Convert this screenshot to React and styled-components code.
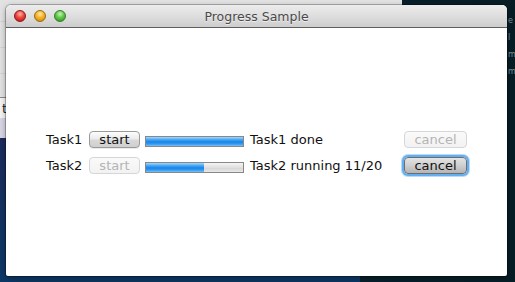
import React from 'react';
import styled, { createGlobalStyle, css } from 'styled-components';

const GlobalStyle = createGlobalStyle`
  html, body {
    margin: 0;
    padding: 0;
    background: #0b2230;
  }
  body {
    font-family: "DejaVu Sans", "Liberation Sans", sans-serif;
  }
`;

const tasks = [
  { name: 'Task1', status: 'Task1 done', progress: 1, running: false },
  { name: 'Task2', status: 'Task2 running 11/20', progress: 0.6, running: true },
];

const App = () => {
  return (
    <Desktop>
      <GlobalStyle />
      <BackWindow>
        <BackToolbar />
        <BackRow><BackLetter>t</BackLetter></BackRow>
        <BackRow $tint />
      </BackWindow>
      <SideText>
        <span>e</span>
        <span>l</span>
        <span>m</span>
        <span>m</span>
      </SideText>
      <Window>
        <TitleBar>
          <Lights>
            <Light $color="red" />
            <Light $color="yellow" />
            <Light $color="green" />
          </Lights>
          <Title>Progress Sample</Title>
        </TitleBar>
        <Content>
          <TaskGrid>
            {tasks.map((t) => (
              <React.Fragment key={t.name}>
                <Label>{t.name}</Label>
                <Button disabled={t.running}>start</Button>
                <Bar>
                  <Fill style={{ width: `${t.progress * 100}%` }} />
                </Bar>
                <Status>{t.status}</Status>
                <Button disabled={!t.running} $focused={t.running}>cancel</Button>
              </React.Fragment>
            ))}
          </TaskGrid>
        </Content>
      </Window>
    </Desktop>
  );
};

export default App;

const Desktop = styled.div`
  position: relative;
  width: 515px;
  height: 282px;
  overflow: hidden;
  background:
    linear-gradient(90deg, transparent 0, transparent 70%, #08202b 70%, #071d26 100%),
    linear-gradient(180deg, #2a2756 0%, #1c2c5c 50%, #0c3866 100%);
`;

const BackWindow = styled.div`
  position: absolute;
  left: -300px;
  top: -30px;
  width: 702px;
  height: 168px;
  display: flex;
  flex-direction: column;
  background: #e7e7e7;
`;

const BackToolbar = styled.div`
  height: 127px;
  border-bottom: 1px solid #8a8a8a;
  background: repeating-linear-gradient(180deg, #e2e2e2 0, #e2e2e2 25px, #d4d4d4 25px, #d4d4d4 26px);
`;

const BackRow = styled.div`
  height: 20px;
  display: flex;
  align-items: center;
  background: ${(p) => (p.$tint ? '#d9d6e4' : '#f4f4f4')};
`;

const BackLetter = styled.span`
  margin-left: 302px;
  font-size: 13px;
  color: #222;
`;

const SideText = styled.div`
  position: absolute;
  left: 508px;
  top: 12px;
  display: flex;
  flex-direction: column;
  font-size: 8px;
  line-height: 17px;
  color: #7f9198;
`;

const Window = styled.div`
  position: absolute;
  left: 6px;
  top: 5px;
  width: 501px;
  height: 271px;
  display: flex;
  flex-direction: column;
  background: #fff;
  border-radius: 5px 5px 2px 2px;
  overflow: hidden;
  box-shadow: 0 0 0 1px rgba(0, 0, 0, 0.25), 0 2px 6px rgba(0, 0, 0, 0.35);
`;

const TitleBar = styled.div`
  position: relative;
  height: 22px;
  flex: none;
  display: flex;
  align-items: center;
  justify-content: center;
  background: linear-gradient(180deg, #ececec 0%, #dedede 50%, #cdcdcd 100%);
  border-bottom: 1px solid #5e5e5e;
`;

const Lights = styled.div`
  position: absolute;
  left: 8px;
  top: 5px;
  display: flex;
  gap: 8px;
`;

const lightColors = {
  red: ['#ffb3ad', '#f0453c', '#b0121a', '#8a1a1a'],
  yellow: ['#ffe9a6', '#f6b326', '#c57d08', '#9a6a14'],
  green: ['#c8f3b5', '#5fc84a', '#2a8a1a', '#3a7a2a'],
};

const Light = styled.span`
  width: 12px;
  height: 12px;
  border-radius: 50%;
  box-sizing: border-box;
  ${(p) => {
    const c = lightColors[p.$color];
    return css`
      background: radial-gradient(circle at 50% 30%, ${c[0]} 0%, ${c[1]} 45%, ${c[2]} 100%);
      border: 1px solid ${c[3]};
    `;
  }}
`;

const Title = styled.span`
  font-size: 12.5px;
  color: #4a4a4a;
  text-shadow: 0 1px 0 rgba(255, 255, 255, 0.6);
`;

const Content = styled.div`
  flex: 1;
  display: flex;
  align-items: center;
  justify-content: center;
`;

const TaskGrid = styled.div`
  display: grid;
  grid-template-columns: 38px 51px 99px 150px 63px;
  grid-auto-rows: 18px;
  column-gap: 5px;
  row-gap: 8px;
  align-items: center;
  font-size: 13px;
  color: #111;
`;

const Label = styled.span`
  white-space: nowrap;
`;

const Status = styled.span`
  padding-left: 1px;
  white-space: nowrap;
`;

const Button = styled.button`
  height: 17px;
  padding: 0;
  font-family: "DejaVu Sans", "Liberation Sans", sans-serif;
  font-size: 13px;
  line-height: 15px;
  color: #111;
  border: 1px solid #9a9a9a;
  border-radius: 4px;
  background: linear-gradient(180deg, #fdfdfd 0%, #ececec 45%, #d8d8d8 55%, #cfcfcf 100%);
  box-shadow: 0 1px 0 rgba(0, 0, 0, 0.08);

  &:disabled {
    color: #b4b4b4;
    border-color: #d6d6d6;
    background: linear-gradient(180deg, #fafafa 0%, #f2f2f2 100%);
    box-shadow: none;
  }

  ${(p) =>
    p.$focused &&
    css`
      &:enabled {
        border-color: #6d6d6d;
        background: linear-gradient(180deg, #e4e4e4 0%, #cfcfcf 50%, #b4b4b4 100%);
        box-shadow: 0 0 0 2px #62aef0, 0 0 0 3px rgba(98, 174, 240, 0.45);
      }
    `}
`;

const Bar = styled.div`
  height: 11px;
  box-sizing: border-box;
  margin-top: 5px;
  border: 1px solid #888;
  background: linear-gradient(180deg, #f4f4f4 0%, #e0e0e0 50%, #d4d4d4 51%, #e8e8e8 100%);
  display: flex;
`;

const Fill = styled.div`
  height: 100%;
  background: linear-gradient(180deg, #a6d6fb 0%, #47a6f4 30%, #1585e8 55%, #3a9cf0 80%, #7cc2f8 100%);
`;
